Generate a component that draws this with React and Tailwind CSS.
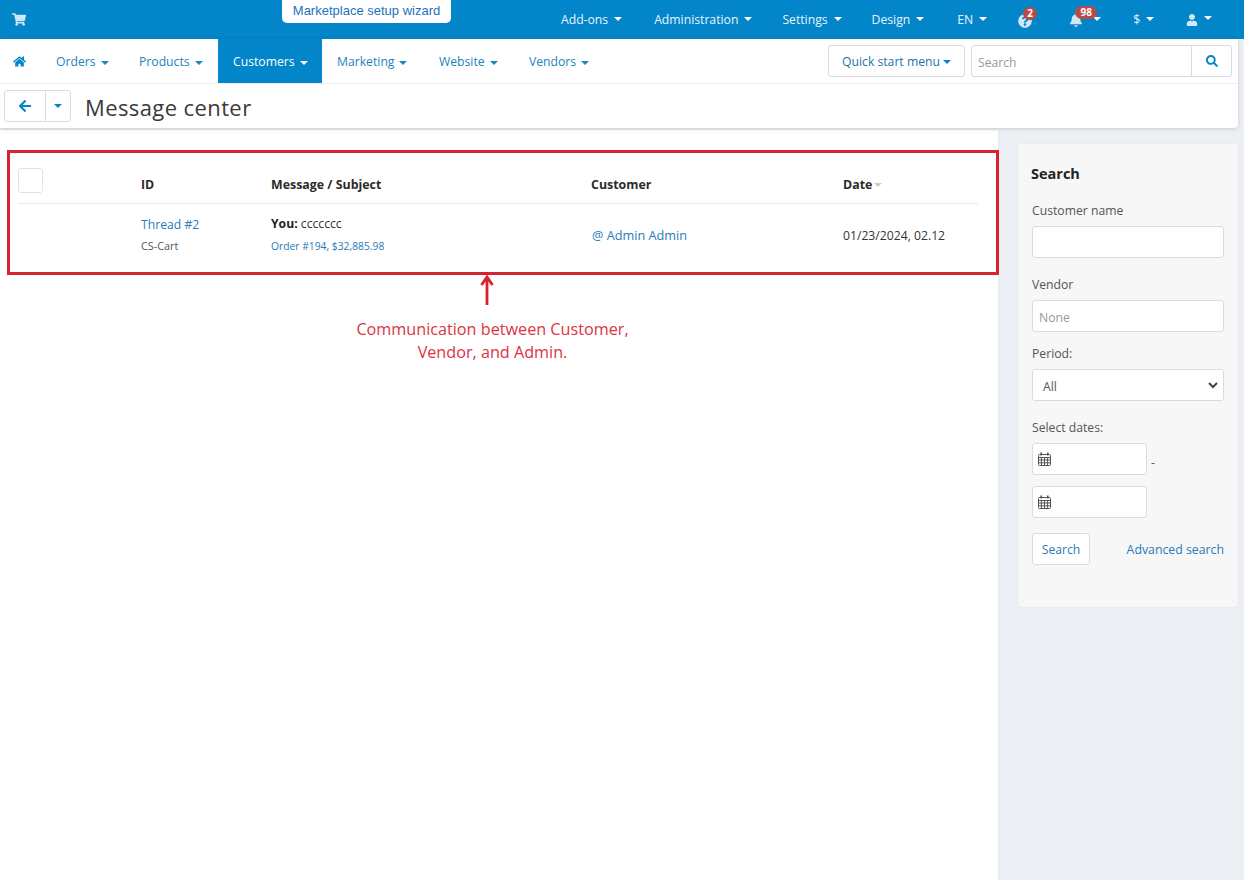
import React from "react";
import { FaShoppingCart, FaHome, FaArrowLeft, FaSearch, FaBell, FaUser, FaQuestionCircle } from "react-icons/fa";

const Caret = ({ className = "" }) => (
  <span className={`inline-block w-0 h-0 border-x-[4px] border-x-transparent border-t-[4px] border-t-current ${className}`} />
);

const Calendar = () => (
  <svg width="13" height="14" viewBox="0 0 13 14" fill="none" stroke="#555" strokeWidth="1">
    <rect x="0.5" y="2.5" width="12" height="11" rx="1" />
    <path d="M0.5 5.5h12M0.5 8h12M0.5 10.8h12M3.4 5.5v8M6.5 5.5v8M9.6 5.5v8" />
    <path d="M3.2 0.5v3M9.8 0.5v3" strokeWidth="1.6" />
  </svg>
);

const TopItem = ({ label, className = "" }) => (
  <div className={`flex items-center pt-[2px] text-[12.2px] text-[#e8f4fb] ${className}`}>
    <span>{label}</span>
    <Caret className="ml-[6px] text-white -mt-[3px]" />
  </div>
);

const NavItem = ({ label, active, className = "" }) => (
  <div className={`h-[44px] flex items-center pl-[15px] pt-[2px] text-[12.2px] ${active ? "bg-[#0385c9] text-white" : "text-[#1a84c0]"} ${className}`}>
    <span>{label}</span>
    <Caret className="ml-[5px] -mb-[1px]" />
  </div>
);

const Field = ({ label, children, className = "" }) => (
  <div className={className}>
    <div className="text-[12.2px] leading-[18px] text-[#555]">{label}</div>
    {children}
  </div>
);

const boxClass = "h-[32px] bg-white border border-[#d9dcdf] rounded-[3px]";

export default function App() {
  return (
    <div className="w-[1244px] h-[880px] overflow-hidden bg-[#eceff3] font-['Open_Sans','Liberation_Sans',sans-serif] relative">
      {/* Top bar */}
      <div className="h-[39px] bg-[#0385c9] flex items-start relative">
        <FaShoppingCart className="text-[#cfe8f6] w-[14px] h-[13px] ml-[12px] mt-[13px]" />
        <div className="absolute left-[282px] top-0 w-[169px] h-[23px] pb-[2px] bg-white rounded-b-[5px] flex items-center justify-center text-[13px] text-[#1a74b8] font-['Liberation_Sans',sans-serif]">
          Marketplace setup wizard
        </div>
        <div className="absolute left-[561px] top-0 h-[39px] flex items-center">
          <TopItem label="Add-ons" />
          <TopItem label="Administration" className="ml-[32px]" />
          <TopItem label="Settings" className="ml-[30px]" />
          <TopItem label="Design" className="ml-[30px]" />
          <TopItem label="EN" className="ml-[33px]" />
          <div className="relative ml-[31px] w-[16px] h-[14px] flex items-center">
            <FaQuestionCircle className="text-[#cfe8f6] w-[14px] h-[14px] mt-[2px]" />
            <span className="absolute left-[5px] -top-[6px] min-w-[14px] h-[13px] px-[3px] rounded-full bg-[#b94a48] text-white text-[10px] font-bold leading-[13px] text-center">2</span>
          </div>
          <div className="relative ml-[36px] w-[31px] h-[14px] flex items-center">
            <FaBell className="text-[#cfe8f6] w-[14px] h-[14px] mt-[1px]" />
            <span className="absolute left-[5px] -top-[7px] w-[22px] h-[13px] rounded-full bg-[#b94a48] text-white text-[10px] font-bold leading-[13px] text-center">98</span>
            <Caret className="ml-[11px] text-white -mt-[1px]" />
          </div>
          <TopItem label="$" className="ml-[32px]" />
          <div className="flex items-center ml-[32px]">
            <FaUser className="text-[#cfe8f6] w-[12px] h-[12px]" />
            <Caret className="ml-[6px] text-white -mt-[3px]" />
          </div>
        </div>
      </div>

      {/* Header panel */}
      <div className="w-[1238px] bg-white rounded-br-[4px] shadow-[0_1px_4px_rgba(0,0,0,0.15)] relative">
        <div className="h-[45px] border-b border-[#eef0f2] flex items-start">
          <div className="w-[41px] h-[44px] flex items-center pl-[13px]">
            <FaHome className="text-[#0385c9] w-[13px] h-[13px]" />
          </div>
          <NavItem label="Orders" className="w-[83px]" />
          <NavItem label="Products" className="w-[94px]" />
          <NavItem label="Customers" active className="w-[104px]" />
          <NavItem label="Marketing" className="w-[102px]" />
          <NavItem label="Website" className="w-[90px]" />
          <NavItem label="Vendors" />
          <div className="ml-auto flex mt-[6px] mr-[6px]">
            <div className="w-[137px] h-[32px] border border-[#d5dde3] rounded-[3px] flex items-center justify-center pt-[3px] text-[12.2px] text-[#1a74ac]">
              Quick start menu
              <Caret className="ml-[3px] text-[#0385c9] -mt-[2px]" />
            </div>
            <div className="w-[261px] h-[32px] ml-[6px] border border-[#d5dde3] rounded-[3px] flex">
              <div className="flex-1 flex items-center px-[6px] pt-[4px] text-[12.2px] text-[#999]">Search</div>
              <div className="w-[40px] border-l border-[#d5dde3] flex items-center justify-center">
                <FaSearch className="text-[#0385c9] w-[12px] h-[12px]" />
              </div>
            </div>
          </div>
        </div>
        <div className="h-[44px] flex items-center pl-[4px]">
          <div className="flex h-[32px] w-[67px] border border-[#d9dcdf] rounded-[3px]">
            <div className="w-[41px] border-r border-[#d9dcdf] flex items-center justify-center">
              <FaArrowLeft className="text-[#0385c9] w-[14px] h-[14px]" />
            </div>
            <div className="flex-1 flex items-center justify-center">
              <Caret className="text-[#0385c9]" />
            </div>
          </div>
          <h1 className="ml-[14px] pt-[2px] text-[22px] leading-[32px] text-[#3a3a3a] tracking-[0.4px]">Message center</h1>
        </div>
      </div>

      {/* Body */}
      <div className="flex mt-[2px] h-[752px] items-start">
        {/* Main */}
        <div className="w-[998px] h-[752px] bg-white pl-[7px] pt-[20px] shadow-[0_0_2px_rgba(0,0,0,0.06)]">
          <div className="w-[992px] h-[125px] border-[3px] border-[#d8232f] pl-[8px] pr-[18px] relative">
            <div className="h-[51px] border-b border-[#e9ecef] flex text-[12.4px] font-bold text-[#2b2b2b] relative">
              <div className="absolute left-0 top-[15px] w-[25px] h-[25px] border border-[#e3e3e3] rounded-[3px] bg-white" />
              <div className="pl-[123px] w-[253px] pt-[23px] leading-[18px]">ID</div>
              <div className="w-[320px] pt-[23px] leading-[18px]">Message / Subject</div>
              <div className="w-[252px] pt-[23px] leading-[18px]">Customer</div>
              <div className="pt-[23px] leading-[18px] flex items-start">
                Date
                <Caret className="ml-[2px] mt-[7px] text-[#ccc]" />
              </div>
            </div>
            <div className="flex h-[68px] text-[12.2px]">
              <div className="pl-[123px] w-[253px] pt-[12px]">
                <div className="leading-[18px] text-[#2a7ab8]">Thread #2</div>
                <div className="text-[10.8px] leading-[14px] mt-[5px] text-[#555]">CS-Cart</div>
              </div>
              <div className="w-[320px] pt-[11px]">
                <div className="leading-[18px] text-[#333]"><b className="text-[#222]">You:</b> ccccccc</div>
                <div className="text-[10.3px] leading-[14px] mt-[6px] text-[#2a7ab8]">Order #194, $32,885.98</div>
              </div>
              <div className="w-[252px] pl-[1px] pt-[22px] text-[12.7px] leading-[18px] text-[#2a7ab8]">@ Admin Admin</div>
              <div className="pt-[23px] leading-[18px] text-[#333]">01/23/2024, 02.12</div>
            </div>
          </div>
          <div className="relative w-[990px]">
            <svg className="absolute left-[472px] top-0" width="16" height="30" viewBox="0 0 16 30" fill="none" stroke="#d8232f" strokeWidth="2.8">
              <path d="M8 2v28M2.5 10L8 2l5.5 8" />
            </svg>
          </div>
          <div className="w-[971px] mt-[43px] text-center text-[16.2px] leading-[23px] text-[#dc3340] font-['Open_Sans',sans-serif]">
            Communication between Customer,
            <br />
            Vendor, and Admin.
          </div>
        </div>

        {/* Sidebar */}
        <div className="ml-[20px] mt-[14px] w-[220px] h-[463px] bg-[#f7f7f7] rounded-[3px] shadow-[0_0_2px_rgba(0,0,0,0.07)] px-[14px] pt-[20px]">
          <div className="-ml-[1px] text-[14.5px] leading-[20px] font-bold text-[#222]">Search</div>
          <Field label="Customer name" className="mt-[18px]">
            <div className={`${boxClass} w-[192px] mt-[6px]`} />
          </Field>
          <Field label="Vendor" className="mt-[18px]">
            <div className={`${boxClass} w-[192px] mt-[6px] flex items-center px-[6px] pt-[5px] text-[12.2px] text-[#999]`}>None</div>
          </Field>
          <Field label="Period:" className="mt-[13px]">
            <div className={`${boxClass} w-[192px] mt-[6px] flex items-center justify-between pl-[10px] pr-[5px] text-[12.2px] text-[#555]`}>
              <span className="mt-[4px]">All</span>
              <svg width="10" height="7" viewBox="0 0 10 7" fill="none" stroke="#444" strokeWidth="2"><path d="M1 1l4 4 4-4" /></svg>
            </div>
          </Field>
          <Field label="Select dates:" className="mt-[18px]">
            <div className="flex items-center mt-[6px]">
              <div className={`${boxClass} w-[115px] flex items-center pl-[5px]`}><Calendar /></div>
              <span className="ml-[4px] mt-[8px] text-[12px] leading-none text-[#555]">-</span>
            </div>
            <div className={`${boxClass} w-[115px] mt-[11px] flex items-center pl-[5px]`}><Calendar /></div>
          </Field>
          <div className="flex items-center justify-between w-[192px] mt-[15px]">
            <div className={`${boxClass} w-[58px] flex items-center justify-center pt-[2px] text-[12.2px] text-[#2a7ab8]`}>Search</div>
            <div className="mt-[2px] text-[12.3px] text-[#2a7ab8]">Advanced search</div>
          </div>
        </div>
      </div>
    </div>
  );
}
